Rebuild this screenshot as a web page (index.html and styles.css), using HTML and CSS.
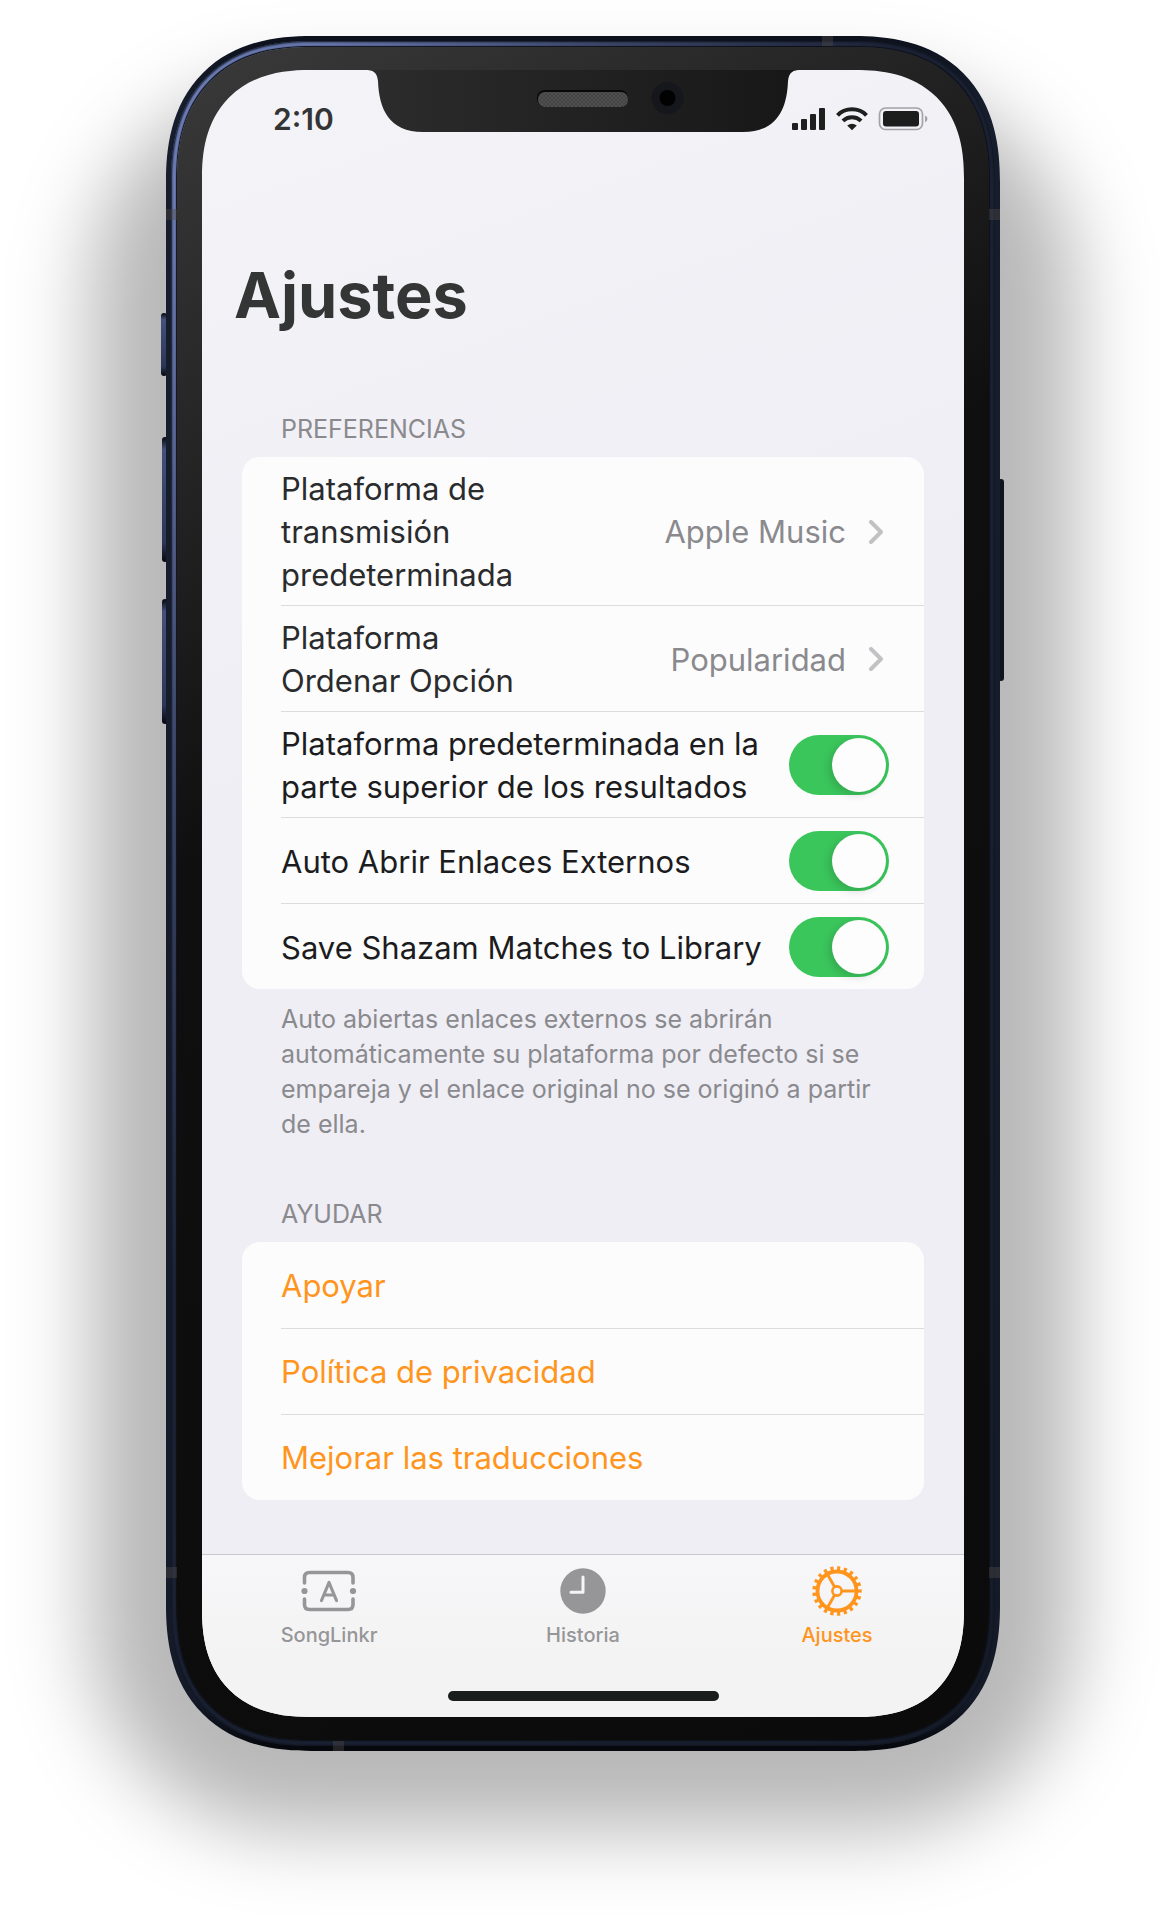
FILE: index.html
```html
<!DOCTYPE html>
<html lang="es">
<head>
<meta charset="utf-8">
<meta name="viewport" content="width=device-width, initial-scale=1">
<title>Ajustes</title>
<link rel="stylesheet" href="styles.css">
</head>
<body>
<div class="phone">
  <span class="key key-mute"></span>
  <span class="key key-up"></span>
  <span class="key key-down"></span>
  <span class="key key-power"></span>
  <div class="frame">
    <span class="band band-side band-left band-high"></span>
    <span class="band band-side band-right band-high"></span>
    <span class="band band-side band-left band-low"></span>
    <span class="band band-side band-right band-low"></span>
    <span class="band band-edge band-top"></span>
    <span class="band band-edge band-bottom"></span>
    <div class="rail">
    <div class="bezel">
      <div class="screen">
        <svg class="notch" viewBox="0 0 436 64" aria-hidden="true">
          <defs>
            <linearGradient id="notch-fill" x1="0" x2="1" y1="0" y2="0">
              <stop offset="0" stop-color="#2c2c2c"/>
              <stop offset="1" stop-color="#171717"/>
            </linearGradient>
            <pattern id="mesh" width="4" height="4" patternUnits="userSpaceOnUse">
              <rect width="4" height="4" fill="#505050"/>
              <circle cx="1" cy="1" r="1" fill="#404040"/>
              <circle cx="3" cy="3" r="1" fill="#404040"/>
            </pattern>
          </defs>
          <path fill="url(#notch-fill)" d="M0 0H436V1C428 1 424 3 423 12C422 40 412 63 378 63H58C24 63 14 40 13 12C12 3 8 1 0 1Z"/>
          <rect x="172" y="21" width="91" height="17" rx="8" fill="#080808"/>
          <rect x="173" y="23" width="90" height="15" rx="7" fill="url(#mesh)"/>
          <circle cx="302.500" cy="29" r="16" fill="#16171d"/>
          <circle cx="302.500" cy="29" r="8" fill="#020202"/>
        </svg>

        <header class="status">
          <time class="clock">2:10</time>
          <svg class="status-icons" viewBox="0 0 136 24" role="img" aria-label="Señal, wifi y batería">
            <g fill="#1d201f">
              <rect x="0" y="16" width="6" height="7" rx="1"/>
              <rect x="9" y="12" width="6" height="11" rx="1"/>
              <rect x="18" y="7" width="6" height="16" rx="1"/>
              <rect x="27" y="1" width="6" height="22" rx="1"/>
              <path d="M60 23.200L55.200 18.600Q60 15 64.800 18.600Z"/>
            </g>
            <g fill="none" stroke="#1d201f" stroke-width="4">
              <path d="M45.500 8.300C53 .3 67 .3 74.500 8.300"/>
              <path d="M50.900 13.900C56 9 64 9 69.100 13.900"/>
            </g>
            <rect x="87.500" y="1" width="43" height="21.500" rx="6" fill="none" stroke="#a3a3a7" stroke-width="1.700"/>
            <rect x="91" y="4" width="36" height="15.500" rx="3" fill="#1b1e1d"/>
            <path d="M133 8.500Q135.500 9.500 135.500 11.800T133 15.200Z" fill="#a3a3a7"/>
          </svg>
        </header>

        <main class="content">
          <h1 class="title">Ajustes</h1>

          <section class="group">
            <h2 class="group-title">PREFERENCIAS</h2>
            <ul class="card">
              <li class="row">
                <button class="row-button" type="button">
                  <span class="row-name">Plataforma de transmisión predeterminada</span>
                  <span class="row-value">Apple Music</span>
                  <svg class="chevron" viewBox="0 0 14 24" aria-hidden="true"><path d="M2 2L12 12L2 22"/></svg>
                </button>
              </li>
              <li class="row">
                <button class="row-button" type="button">
                  <span class="row-name">Plataforma Ordenar Opción</span>
                  <span class="row-value">Popularidad</span>
                  <svg class="chevron" viewBox="0 0 14 24" aria-hidden="true"><path d="M2 2L12 12L2 22"/></svg>
                </button>
              </li>
              <li class="row">
                <label class="row-label" for="on-top">Plataforma predeterminada en la parte superior de los resultados</label>
                <input class="toggle" id="on-top" type="checkbox" role="switch" checked>
              </li>
              <li class="row">
                <label class="row-label" for="auto-open">Auto Abrir Enlaces Externos</label>
                <input class="toggle" id="auto-open" type="checkbox" role="switch" checked>
              </li>
              <li class="row">
                <label class="row-label" for="save-shazam">Save Shazam Matches to Library</label>
                <input class="toggle" id="save-shazam" type="checkbox" role="switch" checked>
              </li>
            </ul>
            <p class="note">Auto abiertas enlaces externos se abrirán automáticamente su plataforma por defecto si se empareja y el enlace original no se originó a partir de ella.</p>
          </section>

          <section class="group">
            <h2 class="group-title">AYUDAR</h2>
            <ul class="card">
              <li class="row"><a class="row-link" href="#apoyar">Apoyar</a></li>
              <li class="row"><a class="row-link" href="#privacidad">Política de privacidad</a></li>
              <li class="row"><a class="row-link" href="#traducciones">Mejorar las traducciones</a></li>
            </ul>
          </section>
        </main>

        <footer class="dock">
          <nav class="tabs">
            <a class="tab" href="#songlinkr">
              <svg class="tab-icon" viewBox="-28 -25 56 50" aria-hidden="true">
                <g fill="none" stroke="currentColor" stroke-width="3.600" stroke-linecap="round" stroke-linejoin="round">
                  <path d="M-24.500 -8V-13.500Q-24.500 -18.500 -19.500 -18.500H19Q24 -18.500 24 -13.500V-8"/>
                  <path d="M-24.500 8V13.500Q-24.500 18.500 -19.500 18.500H19Q24 18.500 24 13.500V8"/>
                  <path d="M-7.500 9.500L0 -8.500L7.500 9.500M-4.500 4H4.500" stroke-width="3.200"/>
                </g>
                <circle cx="-24.500" cy="0" r="3.100" fill="currentColor"/>
                <circle cx="24" cy="0" r="3.100" fill="currentColor"/>
              </svg>
              <span>SongLinkr</span>
            </a>
            <a class="tab" href="#historia">
              <svg class="tab-icon" viewBox="-28 -25 56 50" aria-hidden="true">
                <circle r="22.700" fill="currentColor"/>
                <path d="M0 -14V1.300H-12" fill="none" stroke="#f5f5f6" stroke-width="3" stroke-linecap="round" stroke-linejoin="round"/>
              </svg>
              <span>Historia</span>
            </a>
            <a class="tab tab-current" href="#ajustes" aria-current="page">
              <svg class="tab-icon" viewBox="-28 -25 56 50" aria-hidden="true">
                <g fill="none" stroke="currentColor">
                  <circle r="19.500" stroke-width="3.800"/>
                  <circle r="22.700" stroke-width="4" stroke-dasharray="3.200 3.592" stroke-dashoffset="1.600" pathLength="142.632"/>
                  <circle r="4.600" stroke-width="2.600"/>
                  <path d="M5 0H19M-2.500 -4.330L-9.500 -16.500M-2.500 4.330L-9.500 16.500" stroke-width="2.900"/>
                </g>
              </svg>
              <span>Ajustes</span>
            </a>
          </nav>
          <div class="home-bar"></div>
        </footer>
      </div>
    </div>
    </div>
  </div>
</div>
</body>
</html>
```
FILE: styles.css
```css
* {
  box-sizing: border-box;
}

body {
  margin: 0;
  padding: 36px 166px 167px;
  background: #fff;
  color: #1c1c1e;
  font-family: Inter, "Liberation Sans", sans-serif;
}

/* Device */

.phone {
  position: relative;
  isolation: isolate;
}

.phone::before {
  content: "";
  position: absolute;
  z-index: -1;
  inset: 50px -75px -80px;
  border-radius: 200px;
  background: rgba(0, 0, 0, 0.28);
  filter: blur(40px);
}

.frame {
  position: relative;
  padding: 5px;
  border-radius: 126px;
  background: linear-gradient(#0c111c, #161d2c 4%, #141a28 97%, #05070c);
}

.rail {
  padding: 6px;
  border-radius: 121px;
  background: linear-gradient(120deg, #7688c4 0%, #5c6a9c 12%, #3b4668 24%, #1c2336 40%, #161c2a 100%);
  box-shadow: inset 0 0 2px 1px #10151f;
}

.bezel {
  padding: 23px 25px;
  border-radius: 115px;
  background: linear-gradient(150deg, #3a3a3a 0%, #262626 18%, #0f0f0f 38%, #0b0b0b 100%);
  box-shadow: 0 0 1px 1px #0d1018;
}

.key {
  position: absolute;
  width: 6px;
  border-radius: 3px;
  background: linear-gradient(#05070c, #45517a 10%, #2c3656 85%, #05070c);
}

.key-mute {
  left: -5px;
  top: 277px;
  height: 63px;
}

.key-up {
  left: -4px;
  top: 401px;
  height: 125px;
}

.key-down {
  left: -4px;
  top: 563px;
  height: 125px;
}

.key-power {
  right: -4px;
  top: 443px;
  height: 202px;
  background: #10141f;
}

.band {
  position: absolute;
  z-index: 1;
  background: rgba(80, 76, 72, 0.4);
}

.band-side {
  width: 11px;
  height: 11px;
}

.band-edge {
  width: 11px;
  height: 10px;
}

.band-left {
  left: 0;
}

.band-right {
  right: 0;
}

.band-high {
  top: 173px;
}

.band-low {
  bottom: 173px;
}

.band-top {
  top: 0;
  right: 167px;
}

.band-bottom {
  bottom: 0;
  left: 167px;
}

/* Screen */

.screen {
  position: relative;
  display: flex;
  flex-direction: column;
  overflow: hidden;
  border-radius: 94px;
  background: linear-gradient(160deg, #f4f3f8, #efeef4 40%);
}

/* Continuous corners where the browser can draw them */
@supports (corner-shape: superellipse(1.25)) {
  .frame,
  .rail,
  .bezel,
  .screen {
    corner-shape: superellipse(1.25);
  }

  .frame {
    border-radius: 146px;
  }

  .rail {
    border-radius: 141px;
  }

  .bezel {
    border-radius: 134px;
  }

  .screen {
    border-radius: 108px;
  }
}

.notch {
  position: absolute;
  top: -1px;
  left: 50%;
  width: 436px;
  height: 64px;
  transform: translateX(-50%);
}

.status {
  display: flex;
  justify-content: space-between;
  align-items: center;
  padding: 30px 36px 0 71px;
}

.clock {
  color: #333535;
  font-size: 30px;
  font-weight: 600;
  line-height: 38px;
}

.status-icons {
  width: 136px;
  height: 24px;
}

.content {
  flex: 1;
  padding: 117px 40px 54px;
}

.title {
  margin: 0 -8px;
  color: #343636;
  font-size: 63px;
  font-weight: 700;
  line-height: 80px;
}

.group {
  padding-top: 54px;
}

.title + .group {
  padding-top: 76px;
}

.group-title {
  margin: 0;
  padding: 0 39px 10px;
  color: #8a8a8e;
  font-size: 25px;
  font-weight: 400;
  line-height: 36px;
}

.card {
  margin: 0;
  padding: 0 0 0 39px;
  list-style: none;
  border-radius: 18px;
  background: #fcfcfd;
}

.row {
  display: flex;
  align-items: center;
  gap: 20px;
  min-height: 86px;
  padding-right: 35px;
  font-size: 31px;
  line-height: 43px;
}

.row + .row {
  border-top: 1px solid #dcdcdf;
}

.row-button {
  display: flex;
  align-items: center;
  flex: 1;
  padding: 10px 6px 9px 0;
  border: 0;
  background: none;
  color: #2a2b2c;
  font: inherit;
  text-align: left;
}

.row-name {
  width: 260px;
}

.row-value {
  margin-left: auto;
  padding-right: 23px;
  color: #8a8a8e;
}

.chevron {
  width: 14px;
  height: 24px;
  fill: none;
  stroke: #c2c2c5;
  stroke-width: 4;
  stroke-linecap: round;
  stroke-linejoin: round;
}

.row-label {
  flex: 1;
  padding: 10px 0 9px;
}

.toggle {
  appearance: none;
  display: flex;
  flex: none;
  width: 100px;
  height: 60px;
  margin: 0;
  padding: 3px;
  border-radius: 30px;
  background: #d9d9dc;
}

.toggle::before {
  content: "";
  width: 54px;
  height: 54px;
  border-radius: 50%;
  background: #fdfdfd;
  box-shadow: -3px 3px 8px rgba(0, 0, 0, 0.15);
}

.toggle:checked {
  justify-content: flex-end;
  background: #3bc65c;
}

.note {
  margin: 0;
  padding: 13px 39px 0;
  color: #8a8a8e;
  font-size: 25px;
  line-height: 35px;
}

.row-link {
  flex: 1;
  color: #ff951d;
  text-decoration: none;
}

/* Tab bar */

.dock {
  padding: 11px 0 16px;
  border-top: 1px solid #c9c9cd;
  background: linear-gradient(#f7f7fa, #f3f3f3 60%);
}

.tabs {
  display: grid;
  grid-template-columns: repeat(3, 1fr);
}

.tab {
  display: flex;
  flex-direction: column;
  align-items: center;
  gap: 6px;
  color: #969698;
  font-size: 20px;
  font-weight: 500;
  line-height: 26px;
  text-decoration: none;
}

.tab-current {
  color: #ff951d;
}

.tab-icon {
  width: 56px;
  height: 50px;
}

.home-bar {
  width: 271px;
  height: 10px;
  margin: 43px auto 0;
  border-radius: 5px;
  background: #1b1d1c;
}
```
